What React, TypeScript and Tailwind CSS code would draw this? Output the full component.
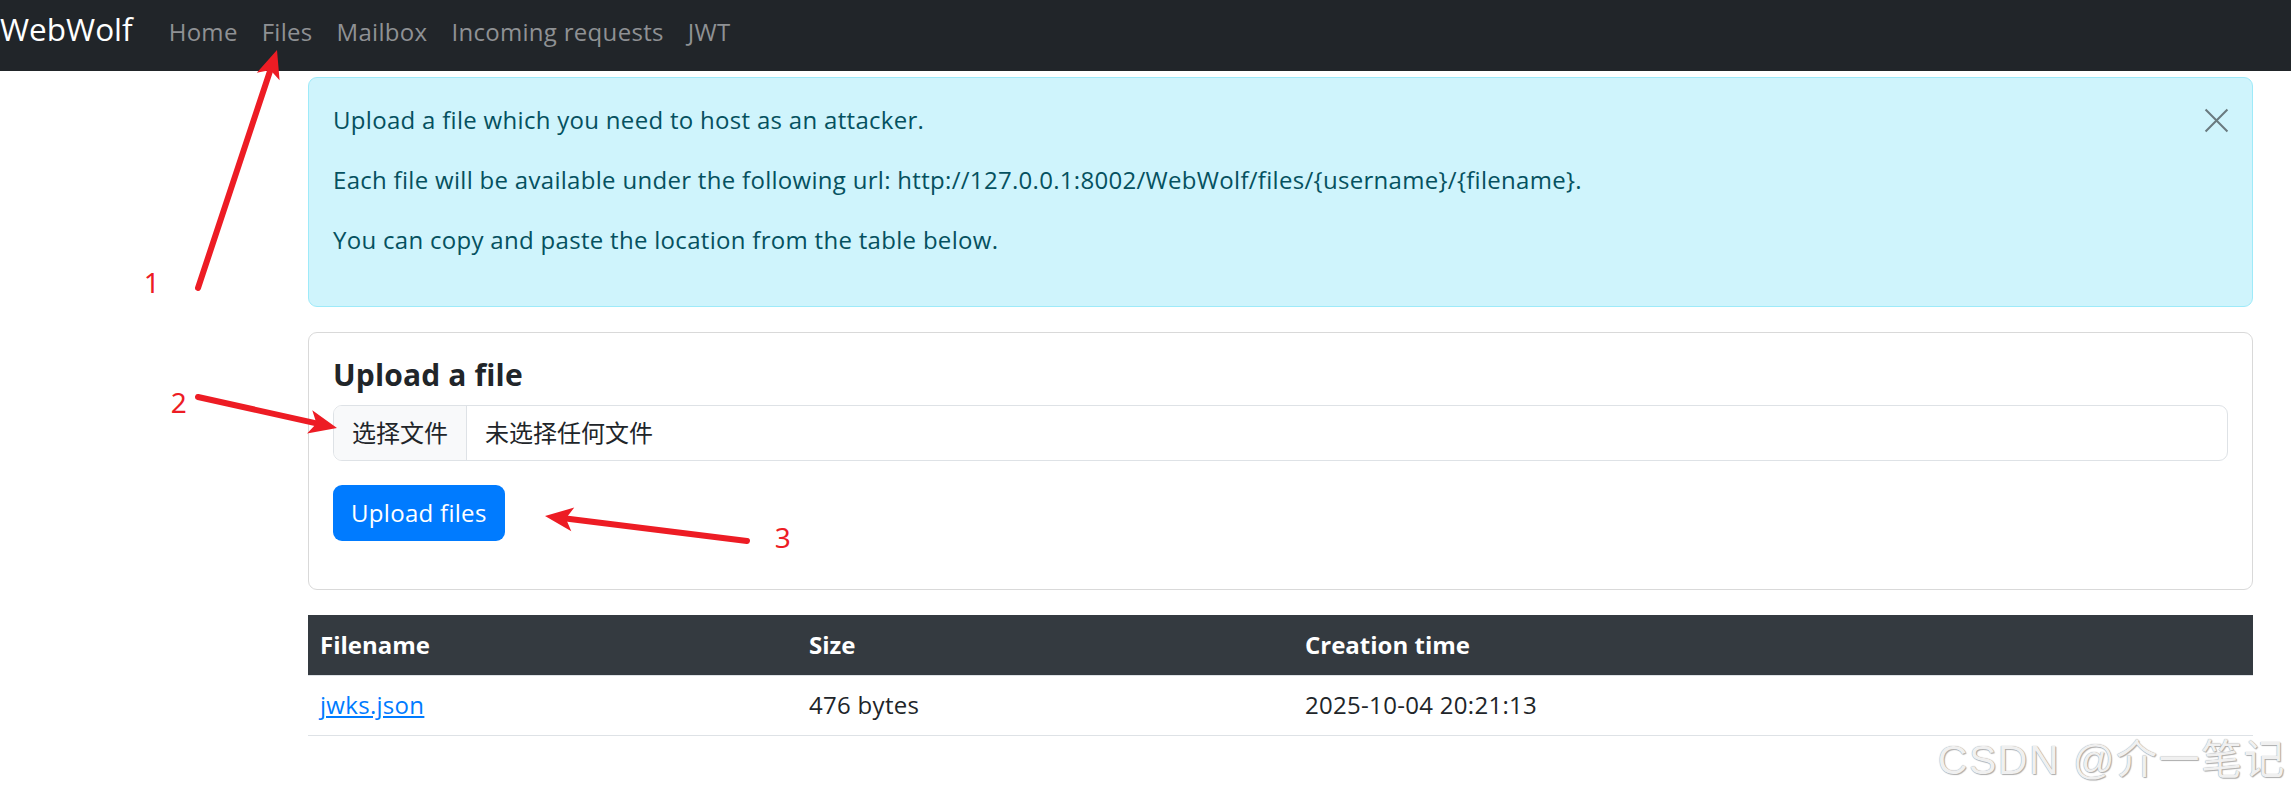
import type { ReactNode } from "react"

const navLinks = ["Home", "Files", "Mailbox", "Incoming requests", "JWT"]

type Pt = [number, number]

// red annotation arrow: shaft from tail to the notch, filled head at tip
function Arrow({ from, to }: { from: Pt; to: Pt }) {
  const dx = to[0] - from[0]
  const dy = to[1] - from[1]
  const len = Math.hypot(dx, dy)
  const ux = dx / len
  const uy = dy / len
  const nx = -uy
  const ny = ux
  const headLen = 28
  const half = 12
  const bx = to[0] - ux * headLen
  const by = to[1] - uy * headLen
  const notchX = to[0] - ux * (headLen - 7)
  const notchY = to[1] - uy * (headLen - 7)
  const head = [
    `${to[0]},${to[1]}`,
    `${bx + nx * half},${by + ny * half}`,
    `${notchX},${notchY}`,
    `${bx - nx * half},${by - ny * half}`,
  ].join(" ")
  return (
    <g>
      <line
        x1={from[0]}
        y1={from[1]}
        x2={notchX}
        y2={notchY}
        stroke="#ed1c24"
        strokeWidth={6}
        strokeLinecap="round"
      />
      <polygon points={head} fill="#ed1c24" />
    </g>
  )
}

function Th({ children, className = "" }: { children: ReactNode; className?: string }) {
  return <th className={`px-[12px] text-left font-bold tracking-normal ${className}`}>{children}</th>
}

export default function App() {
  return (
    <div className="relative min-h-[800px] w-full overflow-hidden bg-white font-['Open_Sans','Noto_Sans_CJK_SC',sans-serif] text-[24px] leading-[36px] tracking-[0.3px] text-[#212529]">
      <nav className="flex h-[71px] items-baseline bg-[#212529] pt-[6px]">
        <span className="mr-[24px] text-[31.5px] leading-[45px] tracking-normal text-white">WebWolf</span>
        {navLinks.map((l) => (
          <a key={l} className="px-[12px] text-[#8f9194]">
            {l}
          </a>
        ))}
      </nav>

      <main className="ml-[308px] mr-[38px] pt-[6px]">
        <div className="relative rounded-[9px] border border-[#9eeaf9] bg-[#cff4fc] px-[24px] pb-[24px] pr-[72px] pt-[24px] text-[#055160]">
          <p className="mb-[24px]">Upload a file which you need to host as an attacker.</p>
          <p className="mb-[24px]">
            Each file will be available under the following url:
            http://127.0.0.1:8002/WebWolf/files/{"{username}"}/{"{filename}"}.
          </p>
          <p className="mb-[24px]">You can copy and paste the location from the table below.</p>
          <button className="absolute right-[23px] top-[30px] h-[25px] w-[25px]" aria-label="Close">
            <svg viewBox="0 0 16 16" className="h-full w-full" fill="none" stroke="#6a7a7f" strokeWidth={1.3}>
              <path d="M1 1 15 15M15 1 1 15" />
            </svg>
          </button>
        </div>

        <div className="mt-[25px] rounded-[9px] border border-[#d9d9d9] px-[24px] pb-[24px] pt-[24px]">
          <h5 className="mb-[12px] text-[30px] font-bold leading-[36px] tracking-[0.15px]">Upload a file</h5>
          <div className="flex h-[56px] items-stretch overflow-hidden rounded-[9px] border border-[#dee2e6]">
            <span className="flex items-center border-r border-[#dee2e6] bg-[#f8f9fa] px-[18px] tracking-normal">选择文件</span>
            <span className="flex items-center pl-[18px] tracking-normal">未选择任何文件</span>
          </div>
          <div className="mb-[24px] mt-[24px] flex">
            <button className="h-[56px] rounded-[9px] bg-[#007bff] px-[18px] text-white">Upload files</button>
          </div>
        </div>

        <table className="mt-[25px] w-full border-collapse">
          <thead>
            <tr className="h-[60px] border-b border-[#dee2e6] bg-[#343a40] text-white">
              <Th className="w-[489px]">Filename</Th>
              <Th className="w-[496px]">Size</Th>
              <Th>Creation time</Th>
            </tr>
          </thead>
          <tbody>
            <tr className="h-[60px] border-b border-[#dee2e6]">
              <td className="px-[12px]">
                <a className="text-[#007bff] underline">jwks.json</a>
              </td>
              <td className="px-[12px]">476 bytes</td>
              <td className="px-[12px]">2025-10-04 20:21:13</td>
            </tr>
          </tbody>
        </table>
      </main>

      <svg className="pointer-events-none absolute left-0 top-0" width={2291} height={800}>
        <Arrow from={[198, 288]} to={[277, 50]} />
        <Arrow from={[198, 397]} to={[337, 428]} />
        <Arrow from={[747, 541]} to={[545, 516]} />
        <g fill="#ed1c24" fontFamily="'Noto Sans', sans-serif" fontSize={28} textAnchor="middle">
          <text x={152} y={293}>1</text>
          <text x={179} y={413}>2</text>
          <text x={783} y={548}>3</text>
        </g>
      </svg>

      <div className="pointer-events-none absolute right-[5px] top-[736px] font-['Liberation_Sans','Noto_Sans_CJK_SC',sans-serif] text-[41px] leading-[48px] tracking-[1.5px] text-[#f0f0f0] [text-shadow:0_0_1px_#8a8a8a,1px_1px_1px_#b0b0b0]">
        CSDN @介一笔记
      </div>
    </div>
  )
}
